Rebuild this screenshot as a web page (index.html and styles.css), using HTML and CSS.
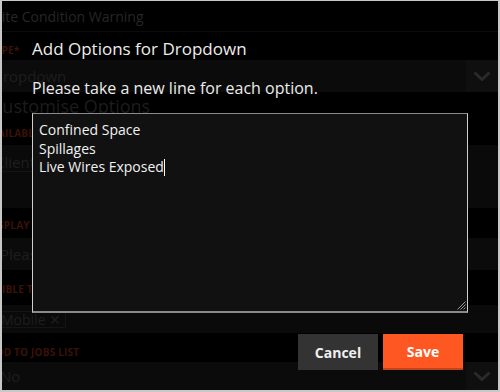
FILE: index.html
```html
<!DOCTYPE html>
<html lang="en">
<head>
    <meta charset="UTF-8">
    <meta name="viewport" content="width=device-width, initial-scale=1.0">
    <title>Add Options for Dropdown</title>
    <link rel="stylesheet" href="styles.css">
</head>
<body>
    <div class="frame">
        <div class="page">
            <div class="row title-row">Site Condition Warning</div>
            <div class="row label label-type">Type*</div>
            <div class="row select">
                <span>Dropdown</span>
                <span class="arrow">
                    <svg width="18" height="10" viewBox="0 0 18 10"><path d="M1.5 1.5 L9 8.5 L16.5 1.5" fill="none" stroke="#2a2a2a" stroke-width="3"/></svg>
                </span>
            </div>
            <div class="row heading">Customise Options</div>
            <div class="row label label-avail">Available To</div>
            <div class="row field-area">
                <div class="field-line">Client</div>
                <div class="field-box"></div>
            </div>
            <div class="row label label-display">Display Text</div>
            <div class="row input">Please select</div>
            <div class="row label label-visible">Visible To</div>
            <div class="row chips">
                <span class="chip">Mobile &#x2715;</span>
            </div>
            <div class="row label label-jobs">Add To Jobs List</div>
            <div class="row select select-no">
                <span>No</span>
                <span class="arrow">
                    <svg width="18" height="10" viewBox="0 0 18 10"><path d="M1.5 1.5 L9 8.5 L16.5 1.5" fill="none" stroke="#2a2a2a" stroke-width="3"/></svg>
                </span>
            </div>
        </div>

        <div class="modal">
            <h2 class="modal-title">Add Options for Dropdown</h2>
            <p class="modal-hint">Please take a new line for each option.</p>
            <div class="options-box">
                <div>Confined Space</div>
                <div>Spillages</div>
                <div>Live Wires Exposed<span class="caret"></span></div>
                <svg class="grip" width="9" height="9" viewBox="0 0 9 9"><path d="M8.5 0.5 L0.5 8.5 M8.5 3.5 L3.5 8.5 M8.5 6.5 L6.5 8.5" stroke="#9a9a9a" stroke-width="1"/></svg>
            </div>
            <div class="actions">
                <button class="btn btn-cancel">Cancel</button>
                <button class="btn btn-save">Save</button>
            </div>
        </div>
    </div>
</body>
</html>
```

FILE: styles.css
```css
body {
    margin: 0;
    background-color: #000;
    font-family: "Open Sans", "Liberation Sans", sans-serif;
}

.frame {
    position: relative;
    width: 496px;
    height: 389px;
    border-style: solid;
    border-color: #c8c8c8;
    border-width: 1px 2px 2px 2px;
    background-color: #000;
    overflow: hidden;
}

.page {
    margin-left: -10px;
}

.row {
    display: flex;
    align-items: center;
    box-sizing: border-box;
}

.title-row {
    height: 31px;
    padding-top: 1px;
    font-size: 14px;
    color: #262626;
    border-bottom: 1px solid #0c0c0c;
    margin-left: 2px;
}

.label {
    font-size: 10px;
    font-weight: bold;
    text-transform: uppercase;
    color: #3a1207;
    letter-spacing: 0.2px;
}

.row.label {
    height: 28px;
    padding-top: 8px;
}

.row.label-type {
    margin-left: -3px;
}

.select {
    height: 32px;
    background-color: #0b0b0b;
    font-size: 15px;
    color: #1e1e1e;
    justify-content: space-between;
}

.select-no {
    height: 28px;
    padding-left: 8px;
}

.arrow {
    display: flex;
    align-items: center;
    justify-content: center;
    width: 32px;
    height: 100%;
    background-color: #0f0f0f;
}

.heading {
    height: 26px;
    font-size: 18px;
    color: #1d1d1d;
    padding-top: 1px;
    margin-left: -1px;
}

.row.label-avail {
    height: 27px;
    padding-top: 3px;
    margin-left: -8px;
}

.field-area {
    position: relative;
    height: 63px;
    background-color: #0a0a0a;
    align-items: flex-start;
    padding-left: 3px;
}

.field-line {
    width: 110px;
    padding-top: 9px;
    font-size: 15px;
    color: #1e1e1e;
    border-bottom: 1px solid #141414;
    line-height: 17px;
}

.field-box {
    position: absolute;
    right: 36px;
    top: 8px;
    width: 20px;
    height: 19px;
    border: 1px solid #141414;
    border-radius: 3px;
}

.row.label-display {
    height: 30px;
    padding-top: 4px;
    margin-left: -5px;
}

.input {
    height: 32px;
    background-color: #0b0b0b;
    font-size: 15px;
    color: #1e1e1e;
    padding-left: 8px;
}

.row.label-visible {
    height: 35px;
    padding-top: 3px;
    margin-left: -6px;
}

.chips {
    height: 28px;
    background-color: #0a0a0a;
}

.chip {
    border: 1px solid #141414;
    font-size: 14px;
    line-height: 15px;
    padding: 0 4px 0 2px;
    color: #1e1e1e;
    margin-left: 6px;
}

.row.label-jobs {
    height: 29px;
    padding-top: 9px;
    margin-left: -3px;
}

.modal {
    position: absolute;
    top: 0;
    left: 0;
    right: 0;
    bottom: 0;
    padding: 37px 35px 0 30px;
    color: #ececec;
}

.modal-title {
    margin: 0;
    font-size: 17px;
    font-weight: normal;
    line-height: 22px;
}

.modal-hint {
    margin: 18px 0 0 0;
    font-size: 16px;
    line-height: 20px;
}

.options-box {
    position: relative;
    box-sizing: border-box;
    width: 436px;
    height: 200px;
    margin-top: 15px;
    padding: 7px 6px;
    background-color: #111;
    border: 1px solid #cfcfcf;
    border-top-color: #8a8a8a;
    border-bottom: 2px solid #8a8a8a;
    font-size: 14px;
    line-height: 18.5px;
    color: #f2f2f2;
}

.caret {
    display: inline-block;
    width: 1px;
    height: 17px;
    background-color: #fff;
    vertical-align: -4px;
}

.grip {
    position: absolute;
    right: 1px;
    bottom: 1px;
}

.actions {
    display: flex;
    justify-content: flex-end;
    gap: 5px;
    margin-top: 21px;
}

.btn {
    width: 80px;
    height: 36px;
    border: none;
    font-family: "Open Sans", "Liberation Sans", sans-serif;
    font-size: 14px;
    font-weight: bold;
    color: #f0f0f0;
}

.btn-cancel {
    background-color: #333;
}

.btn-save {
    background-color: #ff5722;
    border-bottom: 2px solid #c4441c;
    color: #fff;
}
```
